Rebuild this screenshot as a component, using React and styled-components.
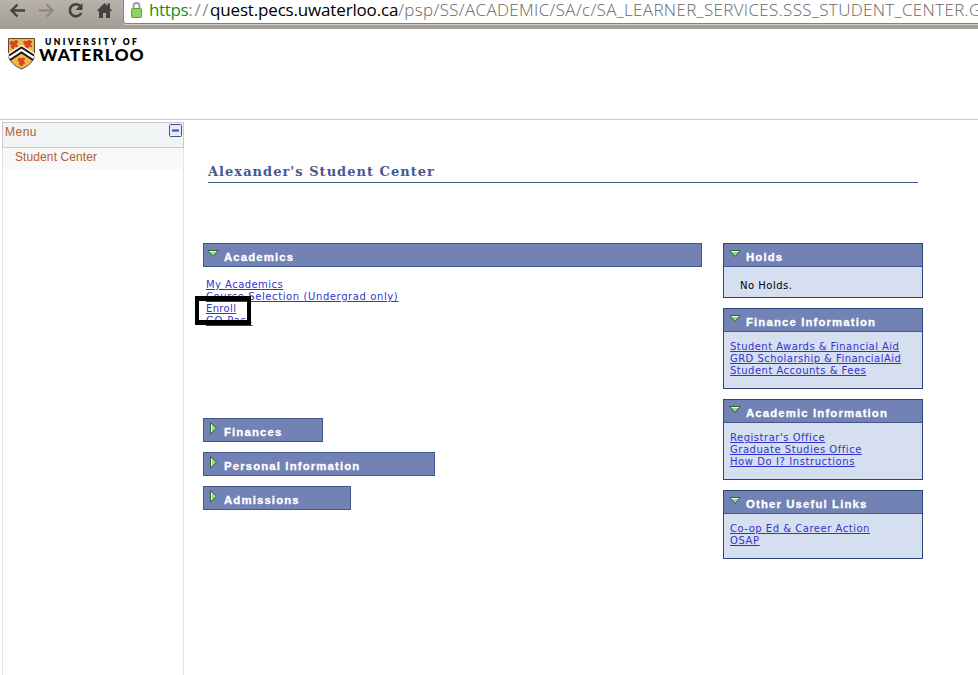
import React from "react";
import styled, { createGlobalStyle } from "styled-components";

const Global = createGlobalStyle`
  body { margin: 0; background: #fff; overflow: hidden; }
  * { box-sizing: border-box; }
`;
const Page = styled.div`
  width: 978px; height: 675px; display: flex; flex-direction: column; overflow: hidden;
  font-family: "DejaVu Sans", sans-serif;
`;
const Toolbar = styled.header`
  height: 29px; flex: none; display: flex; align-items: flex-start;
  background: linear-gradient(#b9b2aa, #a39d95);
`;
const NavIcons = styled.svg`width: 123px; height: 24px; flex: none;`;
const AddressBar = styled.div`
  flex: 1; min-width: 0; height: 24px; background: #fff; border: 1px solid #85817c; border-width: 0 0 1px 1px;
  border-bottom-left-radius: 3px; box-shadow: 0 1px 0 #d0cdc8; display: flex; overflow: hidden;
`;
const Lock = styled.svg`width: 13px; height: 20px; margin-left: 6px; flex: none;`;
const Url = styled.div`
  display: flex; margin-left: 6px; font: 300 17px/20px "Open Sans", sans-serif; white-space: pre;
`;
const UrlPart = styled.span`color: ${p => p.$c}; letter-spacing: ${p => p.$ls}px; font-weight: ${p => p.$w || 300};`;
const Banner = styled.div`
  height: 91px; flex: none; border-bottom: 1px solid #c9cbd3; padding: 8px 0 0 7px; display: flex;
`;
const Crest = styled.svg`width: 29px; height: 33px; flex: none;`;
const Brand = styled.div`
  margin-left: 3px; font-family: Lato, sans-serif; color: #000; white-space: nowrap;
`;
const BrandTop = styled.div`font-size: 8.5px; line-height: 10px; font-weight: 800; letter-spacing: 2.35px; padding-left: 6px;`;
const BrandMain = styled.div`font-size: 17.5px; line-height: 15px; font-weight: 900; letter-spacing: 1px;`;
const Columns = styled.div`display: flex; flex: 1; min-height: 0;`;
const Sidebar = styled.nav`
  width: 182px; margin: 2px 0 0 2px; border: 1px solid #e3e3e6; border-width: 0 1px; flex: none;
  font: 12px/14px "Liberation Sans", sans-serif; color: #b3602a;
`;
const MenuHead = styled.div`
  height: 26px; margin: 0 -1px; border: 1px solid #c9cbd3; background: #f0f4f5;
  display: flex; justify-content: space-between; padding: 2px 1px 0 2px; letter-spacing: 0.5px;
`;
const Collapse = styled.svg`width: 13px; height: 13px; margin-top: -1px;`;
const MenuItem = styled.div`height: 21px; background: #f8f8f8; padding: 2px 0 0 12px; letter-spacing: 0.1px;`;
const Main = styled.main`width: 739px; padding-left: 19px; display: flex; flex-direction: column;`;
const Title = styled.h1`
  margin: 42px 5px 0; height: 21px; border-bottom: 1px solid #46588d; color: #46588d;
  font: bold 13px/19px "DejaVu Serif", serif; letter-spacing: 1.02px; white-space: nowrap;
`;
const Body = styled.div`display: flex; justify-content: space-between; margin-top: 60px;`;
const MainColumn = styled.section`width: 499px;`;
const SideColumn = styled.aside`width: 200px; display: flex; flex-direction: column; gap: 10px;`;
const SectionHead = styled.div`
  width: ${p => p.$w ? p.$w + "px" : "auto"}; height: 24px; background: #7382b5; border: 1px solid #42568c;
  display: flex; color: #fff; font: bold 11.4px/26px "Liberation Sans", sans-serif; white-space: nowrap;
`;
const HeadText = styled.span`letter-spacing: 1.12px; -webkit-text-stroke: 0.3px #fff;`;
const Arrow = styled.svg`
  width: 12px; height: 14px; flex: none; margin: ${p => p.$open ? "4px 5px 0 3px" : "2px 5px 0 3px"};
`;
const Card = styled.div`
  height: ${p => p.$h}px; background: #d6dff0; border: 1px solid #2b4479;
`;
const CardHead = styled(SectionHead)`border-width: 0 0 1px; height: 23px; line-height: 26px; & svg { margin-left: 5px; }`;
const Links = styled.div`
  display: flex; flex-direction: column; align-items: flex-start; padding: ${p => p.$pad};
  position: relative;
`;
const Link = styled.a`
  font-size: 10px; line-height: 12px; height: 12px; letter-spacing: ${p => p.$ls ?? 0.4}px; color: #3333cc;
  text-decoration: underline; text-underline-offset: 1px; white-space: nowrap;
`;
const Note = styled.p`margin: 12px 0 0 16px; font-size: 10px; line-height: 14px; letter-spacing: 0.5px; color: #000;`;
const Highlight = styled.div`
  position: absolute; left: -8px; top: 29px; width: 56px; height: 29px; border: 4px solid #000; border-width: 5px 4px;
`;
const Collapsed = styled.div`display: flex; flex-direction: column; gap: 10px; margin-top: 91px;`;

const Triangle = ({ open }) => (
  <Arrow $open={open} viewBox="0 0 12 14">
    {open ? <><path d="M.8 2.5h10.4L6 8.5z" fill="#7fe87f" stroke="#3e5c3e" /><path d="M2.5 3.5h7" stroke="#e9ffe9" /></>
      : <><path d="M3.5 1.5v11.5L9.5 7.25z" fill="#7fe87f" stroke="#3e5c3e" /><path d="M4.5 3.5v7.5" stroke="#e9ffe9" /></>}
  </Arrow>
);

const academics = [["My Academics", 0.45], ["Course Selection (Undergrad only)", 0.6], ["Enroll", 0.35], ["GO Pass", 0.8]];
const cards = [
  { title: "Finance Information", h: 81, links: [["Student Awards & Financial Aid", 0.45], ["GRD Scholarship & FinancialAid", 0.46], ["Student Accounts & Fees", 0.49]] },
  { title: "Academic Information", h: 81, links: [["Registrar's Office", 0.52], ["Graduate Studies Office", 0.53], ["How Do I? Instructions", 0.58]] },
  { title: "Other Useful Links", h: 69, links: [["Co-op Ed & Career Action", 0.52], ["OSAP", 0.6]] },
];

export default function App() {
  return (
    <Page>
      <Global />
      <Toolbar>
        <NavIcons viewBox="0 0 123 24" fill="none">
          <path d="M25 10.5H12M17.5 4.5l-6 6 6 6" stroke="#46423f" strokeWidth="2.4" />
          <path d="M39 10.5h13M46.5 4.5l6 6-6 6" stroke="#8b8680" strokeWidth="2.2" />
          <path d="M80 6a6 6 0 1 0 1.2 7" stroke="#46423f" strokeWidth="2.6" />
          <path d="M82.5 3v7h-7z" fill="#46423f" />
          <path d="M97 10.5 104.5 3l3 3V3.5h2.5v5l2 2-1 1-1-1V18h-4v-5h-3v5h-4v-7.5l-1 1z" fill="#46423f" />
        </NavIcons>
        <AddressBar>
          <Lock viewBox="0 0 13 20">
            <path d="M3.5 9V6a3 3 0 0 1 6 0V9" fill="none" stroke="#999" strokeWidth="1.8" />
            <rect x="1.5" y="8.5" width="10" height="9" rx="1" fill="#8bd65f" stroke="#5d9b43" />
          </Lock>
          <Url>
            <UrlPart $c="#12940f" $w={400} $ls={-0.35}>https</UrlPart>
            <UrlPart $c="#8c8c8c" $w={400} $ls={1.6}>://</UrlPart>
            <UrlPart $c="#000" $w={400} $ls={-0.17}>quest.pecs.uwaterloo.ca</UrlPart>
            <UrlPart $c="#666" $ls={0.34}>/psp/SS/ACADEMIC/SA/c/SA_LEARNER_SERVICES.SSS_STUDENT_CENTER.G</UrlPart>
          </Url>
        </AddressBar>
      </Toolbar>
      <Banner>
        <Crest viewBox="0 0 29 33">
          <path d="M1.5 1.5h26V17c0 7-6 12-13 15C7.5 29 1.5 24 1.5 17z" fill="#f0b84a" stroke="#5c4a35" />
          <path d="M4 4l3 1 2-2 2 2-2 2 2 3-3-1-2 3-2-2 1-2-2-1zM17 4l3 1 2-2 3 2-2 2 2 3-3-1-2 3-2-2 1-2-2-1zM12 21l2 1 2-1 2 1-2 2 2 2-2 1-1 2-3-2 1-2-2-1z" fill="#d34a22" stroke="#d34a22" strokeWidth="1" />
          <path d="M2 20 14.5 12 27 20" fill="none" stroke="#fff" strokeWidth="7" />
          <path d="M2 18.5 14.5 10.5 27 18.5M3 23l11.5-7.5L26 23" fill="none" stroke="#1a1612" strokeWidth="2" />
        </Crest>
        <Brand><BrandTop>UNIVERSITY OF</BrandTop><BrandMain>WATERLOO</BrandMain></Brand>
      </Banner>
      <Columns>
        <Sidebar>
          <MenuHead>Menu
            <Collapse viewBox="0 0 13 13"><rect x=".5" y=".5" width="12" height="12" rx="1" fill="#e4ecfb" stroke="#4a5478" /><path d="M3 6.5h7" stroke="#35508f" strokeWidth="2" /></Collapse>
          </MenuHead>
          <MenuItem>Student Center</MenuItem>
        </Sidebar>
        <Main>
          <Title>Alexander's Student Center</Title>
          <Body>
            <MainColumn>
              <SectionHead><Triangle open /><HeadText>Academics</HeadText></SectionHead>
              <Links $pad="12px 3px 0">
                {academics.map(([t, ls]) => <Link key={t} $ls={ls}>{t}</Link>)}
                <Highlight />
              </Links>
              <Collapsed>
                <SectionHead $w={120}><Triangle /><HeadText>Finances</HeadText></SectionHead>
                <SectionHead $w={232}><Triangle /><HeadText>Personal Information</HeadText></SectionHead>
                <SectionHead $w={148}><Triangle /><HeadText>Admissions</HeadText></SectionHead>
              </Collapsed>
            </MainColumn>
            <SideColumn>
              <Card $h={55}><CardHead><Triangle open /><HeadText>Holds</HeadText></CardHead><Note>No Holds.</Note></Card>
              {cards.map(c => (
                <Card key={c.title} $h={c.h}>
                  <CardHead><Triangle open /><HeadText>{c.title}</HeadText></CardHead>
                  <Links $pad="9px 6px 0">{c.links.map(([t, ls]) => <Link key={t} $ls={ls}>{t}</Link>)}</Links>
                </Card>
              ))}
            </SideColumn>
          </Body>
        </Main>
      </Columns>
    </Page>
  );
}
